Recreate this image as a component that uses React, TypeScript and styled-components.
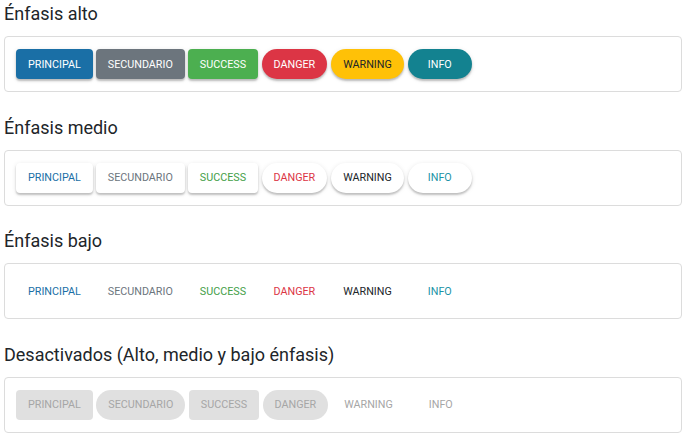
import React from "react";
import styled, { createGlobalStyle, css } from "styled-components";

const Global = createGlobalStyle`
  html, body { margin: 0; padding: 0; background: #ffffff; }
  body { font-family: Roboto, "Liberation Sans", Arial, sans-serif; color: #212529; }
`;

type Variant = "primary" | "secondary" | "success" | "danger" | "warning" | "info";
type Emphasis = "high" | "medium" | "low" | "disabled";
type Shape = "rect" | "pill";

const palette: Record<Variant, { bg: string; fg: string; text: string }> = {
  primary: { bg: "#1a6fa6", fg: "#ffffff", text: "#1a6fa6" },
  secondary: { bg: "#6c757d", fg: "#ffffff", text: "#6c757d" },
  success: { bg: "#4caf50", fg: "#ffffff", text: "#43a047" },
  danger: { bg: "#dc3545", fg: "#ffffff", text: "#dc3545" },
  warning: { bg: "#ffc107", fg: "#212529", text: "#212529" },
  info: { bg: "#138290", fg: "#ffffff", text: "#1a93a6" },
};

const Page = styled.div`
  padding: 2px 4px 0 4px;
  width: 678px;
`;

const Section = styled.section`
  margin-bottom: 23.67px;
  &:last-child {
    margin-bottom: 0;
  }
`;

const Heading = styled.h2`
  margin: 0 0 10px 0;
  font-size: 18px;
  line-height: 24px;
  font-weight: 400;
  color: #212529;
`;

const Card = styled.div`
  border: 1px solid #dcdcdc;
  border-radius: 4px;
  padding: 12px 11px;
  display: flex;
  align-items: center;
  gap: 3px;
`;

const Btn = styled.button<{ $variant: Variant; $emphasis: Emphasis; $shape: Shape; $flat?: boolean }>`
  font-family: Roboto, "Liberation Sans", Arial, sans-serif;
  font-size: 10.75px;
  font-weight: 400;
  text-transform: uppercase;
  height: 30px;
  min-width: 64px;
  padding: 0 12px;
  border: none;
  cursor: pointer;
  display: inline-flex;
  align-items: center;
  justify-content: center;
  border-radius: ${(p) => (p.$shape === "pill" ? "15px" : "4px")};
  margin: ${(p) => (p.$shape === "pill" ? "0 0.5px" : "0")};
  ${(p) => {
    const c = palette[p.$variant];
    switch (p.$emphasis) {
      case "high":
        return css`
          background: ${c.bg};
          color: ${c.fg};
          box-shadow: 0 2px 2px rgba(0, 0, 0, 0.22), 0 1px 5px rgba(0, 0, 0, 0.1);
        `;
      case "medium":
        return css`
          background: #ffffff;
          color: ${c.text};
          box-shadow: 0 2px 2px rgba(0, 0, 0, 0.2), 0 1px 5px rgba(0, 0, 0, 0.1);
        `;
      case "low":
        return css`
          background: transparent;
          color: ${c.text};
        `;
      default:
        return css`
          background: ${p.$flat ? "transparent" : "#e0e0e0"};
          color: #a6a6a6;
          cursor: default;
        `;
    }
  }}
`;

const labels: { v: Variant; label: string; shape: Shape }[] = [
  { v: "primary", label: "Principal", shape: "rect" },
  { v: "secondary", label: "Secundario", shape: "rect" },
  { v: "success", label: "Success", shape: "rect" },
  { v: "danger", label: "Danger", shape: "pill" },
  { v: "warning", label: "Warning", shape: "pill" },
  { v: "info", label: "Info", shape: "pill" },
];

const disabledShapes: { shape: Shape; flat: boolean }[] = [
  { shape: "rect", flat: false },
  { shape: "pill", flat: false },
  { shape: "rect", flat: false },
  { shape: "pill", flat: false },
  { shape: "pill", flat: true },
  { shape: "pill", flat: true },
];

export default function App() {
  const sections: { title: string; emphasis: Emphasis }[] = [
    { title: "Énfasis alto", emphasis: "high" },
    { title: "Énfasis medio", emphasis: "medium" },
    { title: "Énfasis bajo", emphasis: "low" },
    { title: "Desactivados (Alto, medio y bajo énfasis)", emphasis: "disabled" },
  ];
  return (
    <>
      <Global />
      <Page>
        {sections.map((s) => (
          <Section key={s.title}>
            <Heading>{s.title}</Heading>
            <Card>
              {labels.map((b, i) => (
                <Btn
                  key={b.v}
                  $variant={b.v}
                  $emphasis={s.emphasis}
                  $shape={s.emphasis === "disabled" ? disabledShapes[i].shape : b.shape}
                  $flat={s.emphasis === "disabled" ? disabledShapes[i].flat : false}
                  disabled={s.emphasis === "disabled"}
                >
                  {b.label}
                </Btn>
              ))}
            </Card>
          </Section>
        ))}
      </Page>
    </>
  );
}
